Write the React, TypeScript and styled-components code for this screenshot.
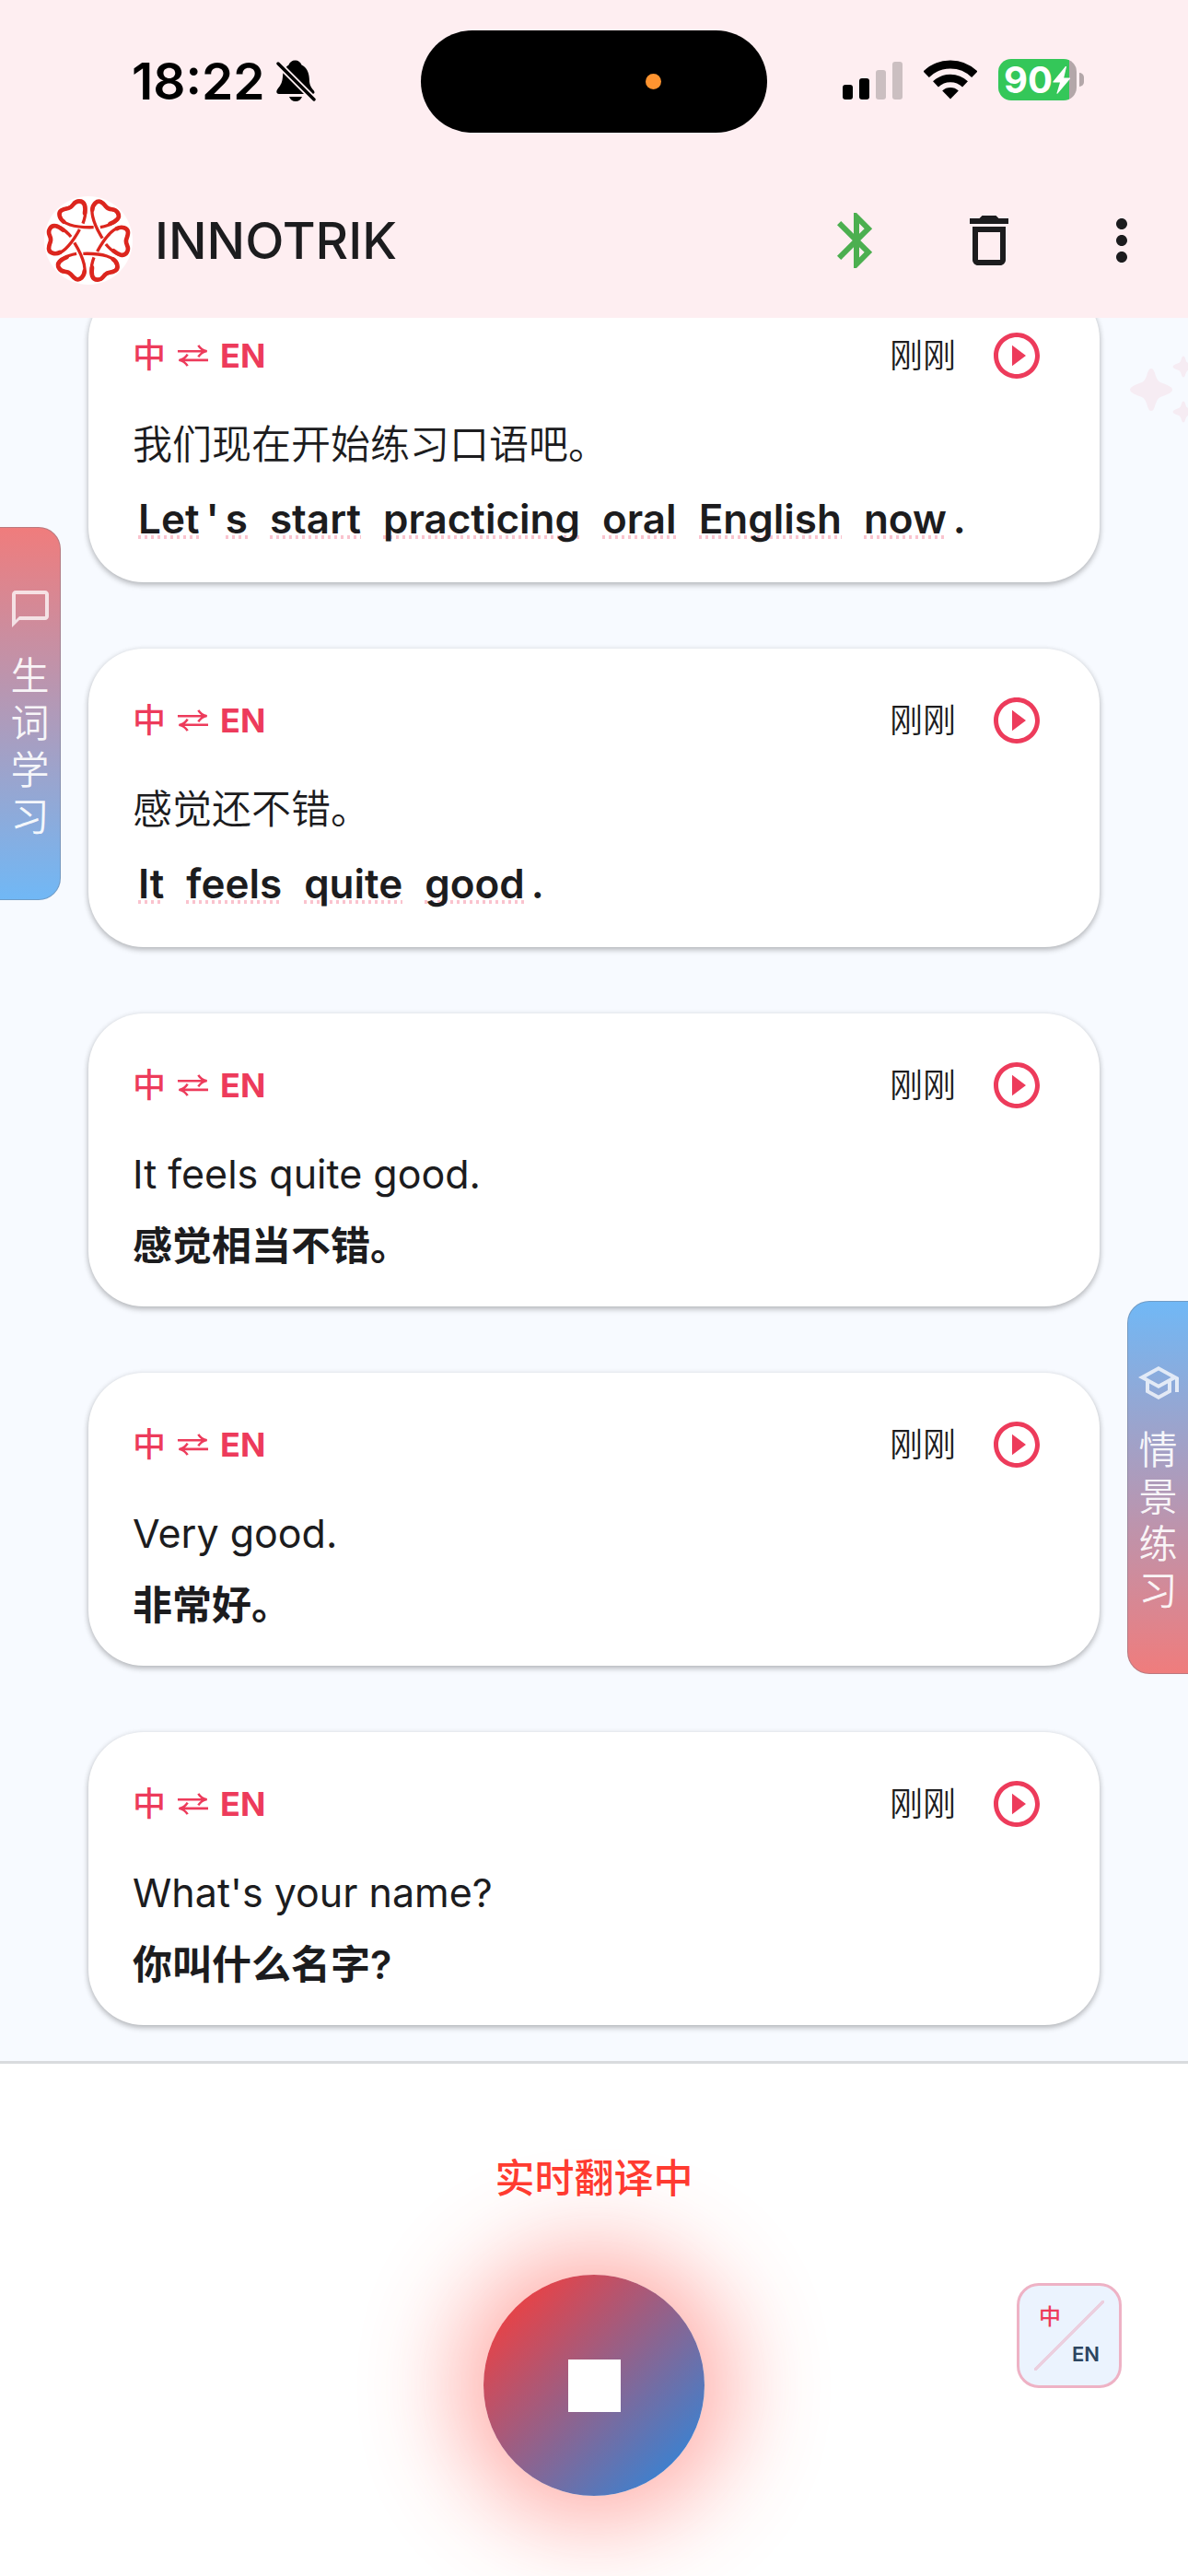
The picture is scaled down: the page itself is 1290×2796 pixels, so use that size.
import React from "react";
import styled, { createGlobalStyle } from "styled-components";
import {
  MdBluetooth,
  MdChatBubbleOutline,
  MdDeleteOutline,
  MdMoreVert,
  MdOutlineSchool,
  MdPlayCircleOutline,
} from "react-icons/md";

const color = {
  ink: "#1c1c1e",
  brand: "#ed3b5b",
  alert: "#ff3b30",
  blush: "#feeef1",
  canvas: "#f7faff",
};

const GlobalStyle = createGlobalStyle`
  * { box-sizing: border-box; }
  body {
    margin: 0;
    background: #fff;
    color: ${color.ink};
    font-family: Inter, "Noto Sans CJK SC", sans-serif;
  }
  button { font: inherit; color: inherit; border: 0; padding: 0; background: none; cursor: pointer; }
  svg { display: block; }
`;

const Screen = styled.div`
  display: flex;
  flex-direction: column;
  height: 100vh;
  overflow: hidden;
`;

/* ---------- status bar ---------- */

const StatusBar = styled.div`
  display: grid;
  grid-template-columns: 1fr 376px 1fr;
  align-items: start;
  height: 177px;
  padding-top: 33px;
  background: ${color.blush};
  color: #000;
`;

const Clock = styled.div`
  display: flex;
  align-items: center;
  gap: 12px;
  padding: 22px 0 0 143px;
  font-size: 55px;
  line-height: 66px;
  font-weight: 600;
`;

const Island = styled.div`
  display: flex;
  align-items: center;
  justify-content: flex-end;
  height: 111px;
  padding-right: 115px;
  border-radius: 56px;
  background: #000;
`;

const MicDot = styled.span`
  width: 17px;
  height: 17px;
  border-radius: 50%;
  background: #ff9430;
`;

const Indicators = styled.div`
  display: flex;
  align-items: center;
  justify-content: flex-end;
  gap: 23px;
  padding: 31px 113px 0 0;
`;

const Battery = styled.div`
  display: flex;
  align-items: center;
  gap: 3px;
`;

const BatteryCell = styled.div`
  display: flex;
  align-items: center;
  justify-content: center;
  width: 85px;
  height: 45px;
  border-radius: 14px;
  background: linear-gradient(90deg, #34c759 77px, #b3a7a9 77px);
  color: #fff;
  font-size: 40px;
  line-height: 45px;
  font-weight: 700;
`;

const BatteryNub = styled.span`
  width: 5px;
  height: 15px;
  border-radius: 0 5px 5px 0;
  background: #b3a7a9;
`;

/* ---------- app bar ---------- */

const AppBar = styled.header`
  display: flex;
  align-items: center;
  height: 168px;
  padding-left: 48px;
  background: ${color.blush};
`;

const Title = styled.h1`
  flex: 1;
  margin: 0 0 0 24px;
  font-size: 55px;
  line-height: 66px;
  font-weight: 500;
`;

const BarButton = styled.button<{ $tint?: string }>`
  display: grid;
  place-items: center;
  width: 144px;
  height: 144px;
  color: ${(p) => p.$tint ?? color.ink};
  font-size: 72px;
`;

/* ---------- conversation ---------- */

const Conversation = styled.main`
  position: relative;
  display: flex;
  flex: 1;
  flex-direction: column;
  justify-content: flex-end;
  gap: 72px;
  min-height: 0;
  padding: 0 96px 39px;
  overflow: hidden;
  background: ${color.canvas};
`;

const Sparkles = styled.svg`
  position: absolute;
  top: 36px;
  right: -12px;
`;

const Card = styled.article`
  position: relative;
  flex: none;
  padding: 48px 60px 36px 48px;
  border-radius: 60px;
  background: #fff;
  box-shadow: 0 3px 6px rgba(0, 0, 0, 0.22), 0 1px 6px rgba(0, 0, 0, 0.1);
`;

const CardHead = styled.div`
  display: flex;
  align-items: center;
  height: 60px;
  margin-bottom: 36px;
`;

const Direction = styled.div`
  display: flex;
  flex: 1;
  align-items: center;
  gap: 12px;
  color: ${color.brand};
  font-size: 36px;
  line-height: 60px;
  font-weight: 700;
`;

const Zh = styled.span`
  font-weight: 500;
`;

const When = styled.span`
  margin-right: 36px;
  font-size: 36px;
  line-height: 60px;
  font-weight: 350;
`;

const PlayButton = styled.button`
  color: ${color.brand};
  font-size: 60px;
`;

const Source = styled.p<{ $latin: boolean }>`
  margin: 0 0 18px;
  font-size: 43px;
  line-height: 60px;
  font-weight: ${(p) => (p.$latin ? 400 : 350)};
`;

const Target = styled.p`
  margin: 0;
  font-size: 43px;
  line-height: 60px;
  font-weight: 600;
`;

const WordLine = styled.p`
  display: flex;
  flex-wrap: wrap;
  margin: 0;
  padding-left: 3px;
  font-size: 44px;
  line-height: 66px;
  font-weight: 600;
`;

const Space = styled.span`
  width: 18px;
`;

const Word = styled.span`
  margin: 0 3px;
  background: repeating-linear-gradient(90deg, #fac3ce 0 3px, transparent 3px 7px) 0 51px / 100% 4px no-repeat;
`;

const Mark = styled.span`
  padding: 0 4px;
`;

/* ---------- side tabs ---------- */

const SideTab = styled.button<{ $side: "left" | "right" }>`
  position: absolute;
  ${(p) => p.$side}: 0;
  top: ${(p) => (p.$side === "left" ? 227 : 1067)}px;
  display: flex;
  flex-direction: column;
  align-items: center;
  gap: 23px;
  width: 66px;
  height: 405px;
  padding-top: 64px;
  border: 1px solid rgba(110, 115, 130, 0.4);
  border-${(p) => p.$side}: 0;
  border-radius: ${(p) => (p.$side === "left" ? "0 24px 24px 0" : "24px 0 0 24px")};
  background: linear-gradient(
    ${(p) => (p.$side === "left" ? "180deg" : "0deg")},
    #f07c7c,
    #70b8f6
  ) border-box;
  color: rgba(255, 255, 255, 0.75);
  font-size: 48px;
`;

const TabText = styled.span`
  width: 42px;
  color: rgba(255, 255, 255, 0.92);
  font-size: 42px;
  line-height: 51px;
  font-weight: 350;
`;

/* ---------- bottom panel ---------- */

const Panel = styled.footer`
  position: relative;
  padding: 94px 72px 87px;
  border-top: 3px solid #d9dbde;
  background: #fff;
`;

const Status = styled.p`
  position: relative;
  z-index: 1;
  margin: 0 0 75px;
  color: ${color.alert};
  font-size: 43px;
  line-height: 60px;
  font-weight: 500;
  text-align: center;
`;

const Controls = styled.div`
  display: grid;
  grid-template-columns: 1fr 240px 1fr;
`;

const StopButton = styled.button`
  display: grid;
  grid-column: 2;
  place-items: center;
  height: 240px;
  border-radius: 50%;
  background: linear-gradient(135deg, #e3444a 15%, #427fcb 85%);
  box-shadow: 0 0 105px 27px rgba(255, 59, 48, 0.44);
`;

const StopSquare = styled.span`
  width: 57px;
  height: 57px;
  background: #fff;
`;

const LangButton = styled.button`
  display: flex;
  flex-direction: column;
  justify-content: space-between;
  justify-self: end;
  width: 114px;
  height: 114px;
  margin-top: 9px;
  padding: 16px 21px;
  border: 3px solid #eeb2c5;
  border-radius: 24px;
  background: linear-gradient(
      135deg,
      transparent calc(50% - 2px),
      #ebcfdf calc(50% - 2px) calc(50% + 2px),
      transparent calc(50% + 2px)
    ) center / 76px 76px no-repeat,
    #ebf3fe;
  font-size: 24px;
  line-height: 36px;
`;

const LangFrom = styled.span`
  align-self: flex-start;
  color: ${color.brand};
  font-weight: 500;
`;

const LangTo = styled.span`
  align-self: flex-end;
  color: #2c4560;
  font-size: 22px;
  font-weight: 600;
`;

/* ---------- drawings ---------- */

const MutedBell = () => (
  <svg width="43" height="46" viewBox="0 0 43 46" aria-hidden="true">
    <path d="M20.500 .5c3.500 0 6 2 7 5 5 2.500 8 7.500 8.300 14.500.3 6.500.8 8.500 4.700 13 2 2.500.8 4-1.700 4H3c-3 0-3.500-3-1.500-5.500C5.500 26.500 6.500 24 7 18 7.500 12 9.500 8 13.500 5.500c1-3 3.500-5 7-5z" />
    <path d="M14 40h14c-1 3-3.800 5-7 5s-6-2-7-5z" />
    <path d="M2 4 41 43" stroke={color.blush} strokeWidth="7" />
    <path d="M2 4 41 43" stroke="#000" strokeWidth="3.400" strokeLinecap="round" />
  </svg>
);

const Signal = () => (
  <svg width="65" height="42" viewBox="0 0 65 42" aria-hidden="true">
    <rect x="0" y="26" width="11" height="16" rx="3" />
    <rect x="18" y="19" width="11" height="23" rx="3" />
    <rect x="36" y="10" width="11" height="32" rx="3" fill="#cbbfc1" />
    <rect x="54" y="1" width="11" height="41" rx="3" fill="#cbbfc1" />
  </svg>
);

const Wifi = () => (
  <svg width="58" height="43" viewBox="0 0 58 43" fill="none" stroke="#000" aria-hidden="true">
    <path d="M2.700 15.700a37.500 37.500 0 0 1 52.600 0" strokeWidth="9" />
    <path d="M13 26.400a23 23 0 0 1 32 0" strokeWidth="8.500" />
    <path d="M29 42.500 20.200 33.500a13 13 0 0 1 17.600 0z" fill="#000" stroke="none" />
  </svg>
);

const Bolt = () => (
  <svg width="20" height="30" viewBox="0 0 20 30" fill="#fff" aria-hidden="true">
    <path d="M14 0 .5 16.500c-.4.500-.1 1 .5 1h7L4.500 29c-.2.800.5 1.200 1 .5L19 13.500c.4-.5.100-1-.5-1h-6.300L15 .6c.2-.7-.5-1.200-1-.6z" />
  </svg>
);

const petals = [0, 60, 120, 180, 240, 300];

const Logo = () => (
  <svg width="96" height="96" viewBox="-144 -144 288 288" role="img" aria-label="INNOTRIK">
    <circle r="144" fill="#fff" />
    {petals.map((angle) => (
      <g key={angle} transform={`rotate(${angle})`} fill="none" stroke="#dc261e">
        <path
          d="M-18-55C-8-82-1-128-30-128C-52-128-46-109-66-105C-84-102-98-97-94-80C-90-54-45-41 17-43"
          strokeWidth="10"
        />
        <path
          d="M-12-88C-9-108-10-128-30-128C-52-128-46-109-66-105C-84-102-98-97-94-80C-92-72-88-66-80-61"
          strokeWidth="14"
          strokeLinecap="round"
        />
      </g>
    ))}
  </svg>
);

const Swap = () => (
  <svg width="35" height="26" viewBox="0 0 36 26" fill="none" stroke="currentColor" strokeWidth="2.600" role="img" aria-label="⇄">
    <path d="M1 8h32M24 1.500Q27 6.500 33.500 8 27 9.500 24 14.500" />
    <path d="M35 18H3M12 11.500Q9 16.500 2.500 18 9 19.500 12 24.500" />
  </svg>
);

const star = "M0-23C2-23 3-21 4-18 6-11 8-9 10-8 18-5 23-3 23 0S18 5 10 8C8 9 6 11 4 18 3 21 2 23 0 23S-3 21-4 18C-6 11-8 9-10 8-18 5-23 3-23 0S-18-5-10-8C-8-9-6-11-4-18-3-21-2-23 0-23Z";

/* ---------- content ---------- */

type Entry = { source: string; target?: string; words?: string };

const entries: Entry[] = [
  { source: "我们现在开始练习口语吧。", words: "Let's start practicing oral English now." },
  { source: "感觉还不错。", words: "It feels quite good." },
  { source: "It feels quite good.", target: "感觉相当不错。" },
  { source: "Very good.", target: "非常好。" },
  { source: "What's your name?", target: "你叫什么名字?" },
];

const TappableWords = ({ text }: { text: string }) => (
  <WordLine>
    {(text.match(/[A-Za-z]+|\s|[^A-Za-z\s]/g) ?? []).map((token, i) => {
      if (token === " ") return <Space key={i}> </Space>;
      if (/[A-Za-z]/.test(token)) return <Word key={i}>{token}</Word>;
      return <Mark key={i}>{token}</Mark>;
    })}
  </WordLine>
);

export default function App() {
  return (
    <Screen>
      <GlobalStyle />
      <StatusBar>
        <Clock>
          18:22
          <MutedBell />
        </Clock>
        <Island>
          <MicDot />
        </Island>
        <Indicators>
          <Signal />
          <Wifi />
          <Battery>
            <BatteryCell>
              90
              <Bolt />
            </BatteryCell>
            <BatteryNub />
          </Battery>
        </Indicators>
      </StatusBar>

      <AppBar>
        <Logo />
        <Title>INNOTRIK</Title>
        <BarButton $tint="#4caf50" aria-label="蓝牙">
          <MdBluetooth />
        </BarButton>
        <BarButton aria-label="清空">
          <MdDeleteOutline />
        </BarButton>
        <BarButton aria-label="更多">
          <MdMoreVert />
        </BarButton>
      </AppBar>

      <Conversation>
        <Sparkles width="75" height="86" viewBox="0 0 75 86" fill="#f6ecf3" aria-hidden="true">
          <path d={star} transform="translate(23 42)" />
          <path d={star} transform="translate(58 17) scale(.5)" />
          <path d={star} transform="translate(58 66) scale(.5)" />
        </Sparkles>
        {entries.map((entry) => (
          <Card key={entry.source}>
            <CardHead>
              <Direction>
                <Zh>中</Zh>
                <Swap />
                EN
              </Direction>
              <When>刚刚</When>
              <PlayButton aria-label="播放">
                <MdPlayCircleOutline />
              </PlayButton>
            </CardHead>
            <Source $latin={!entry.words}>{entry.source}</Source>
            {entry.words ? <TappableWords text={entry.words} /> : <Target>{entry.target}</Target>}
          </Card>
        ))}
        <SideTab $side="left">
          <MdChatBubbleOutline />
          <TabText>生词学习</TabText>
        </SideTab>
        <SideTab $side="right">
          <MdOutlineSchool />
          <TabText>情景练习</TabText>
        </SideTab>
      </Conversation>

      <Panel>
        <Status>实时翻译中</Status>
        <Controls>
          <StopButton aria-label="停止">
            <StopSquare />
          </StopButton>
          <LangButton>
            <LangFrom>中</LangFrom>
            <LangTo>EN</LangTo>
          </LangButton>
        </Controls>
      </Panel>
    </Screen>
  );
}
